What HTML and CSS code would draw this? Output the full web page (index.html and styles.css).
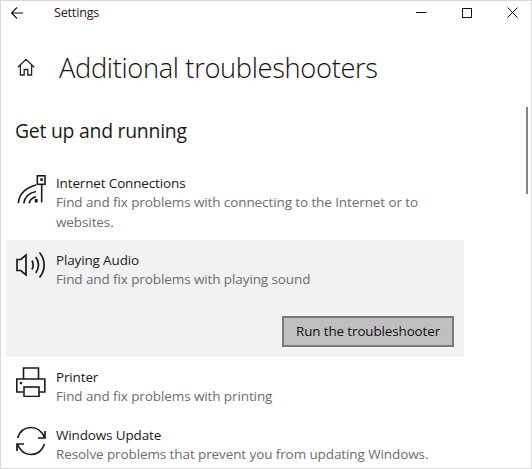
FILE: index.html
```html
<!DOCTYPE html>
<html lang="en">
<head>
<meta charset="utf-8">
<title>Settings</title>
<link rel="stylesheet" href="styles.css">
</head>
<body>
<div class="window">
  <header class="titlebar">
    <svg class="back" width="14" height="14" viewBox="0 0 14 14"><path d="M13 7H1.500M7 1.500 1.500 7 7 12.500" fill="none" stroke="#111" stroke-width="1.100"/></svg>
    <span class="app">Settings</span>
    <div class="controls">
      <svg width="11" height="11" viewBox="0 0 11 11"><path d="M0 5.500h10.500" stroke="#111" stroke-width="1"/></svg>
      <svg width="10" height="10" viewBox="0 0 10 10"><rect x=".5" y=".5" width="9" height="9" fill="none" stroke="#111"/></svg>
      <svg width="11" height="11" viewBox="0 0 11 11"><path d="M.5.500l10 10M10.500.500l-10 10" stroke="#111" stroke-width="1"/></svg>
    </div>
  </header>
  <div class="heading">
    <svg class="home" width="18" height="18" viewBox="0 0 18 18"><path d="M.8 9.200 9 1.300l8.200 7.900M3.400 7v10h3.800v-5.500h3.600V17h3.800V7" fill="none" stroke="#222" stroke-width="1.300"/></svg>
    <h1>Additional troubleshooters</h1>
  </div>
  <h2>Get up and running</h2>
  <ul class="list">
    <li class="item">
      <svg class="icon" width="30" height="30" viewBox="0 0 30 30"><g fill="none" stroke="#1a1a1a" stroke-width="1.600"><path d="M2.300 29.300C3 21 9 14 20 11"/><path d="M7.800 29.300C8.300 24 12 19.300 20 17.500"/><path d="M13.300 29.300c.4-3 2.200-5.300 6.700-6.500"/><rect x="21.300" y="1.800" width="7.700" height="8.500"/><path d="M25.700 10v18.500"/></g><rect x="24.300" y="4.300" width="2.600" height="2.600" fill="#1a1a1a"/><rect x="18.700" y="25" width="3" height="3.500" fill="#1a1a1a"/></svg>
      <div class="text"><div class="name">Internet Connections</div><div class="desc">Find and fix problems with connecting to the Internet or to websites.</div></div>
    </li>
    <li class="item selected">
      <svg class="icon" width="30" height="30" viewBox="0 0 30 30"><g fill="none" stroke="#1a1a1a" stroke-width="1.700"><path d="M1 8.500h3.800L10 4v20l-5.200-4.500H1z"/><path d="M16 9.500c1.600 3 1.600 6 0 9"/><path d="M19.800 6c3.400 5 3.400 11 0 16"/><path d="M23.500 1.500c6.200 7.500 6.200 17.500 0 25"/></g></svg>
      <div class="text"><div class="name">Playing Audio</div><div class="desc">Find and fix problems with playing sound</div></div>
      <button class="run" type="button">Run the troubleshooter</button>
    </li>
    <li class="item">
      <svg class="icon icon-up" width="30" height="30" viewBox="0 0 30 30"><g fill="none" stroke="#1a1a1a" stroke-width="1.600"><path d="M7.500 12V1h15v11"/><path d="M7.500 25H.8V12h28v13h-6"/><rect x="8" y="20" width="15" height="9.500"/></g><rect x="3.800" y="15" width="2.200" height="2.200" fill="#1a1a1a"/></svg>
      <div class="text"><div class="name">Printer</div><div class="desc">Find and fix problems with printing</div></div>
    </li>
    <li class="item">
      <svg class="icon" width="30" height="30" viewBox="0 0 30 30"><g fill="none" stroke="#1a1a1a" stroke-width="1.700"><path d="M1.500 12C4 5 9 1.500 15 1.500c5.500 0 10.500 3 13.500 10"/><path d="M29 5v7h-7"/><path d="M28.500 18C26 25 21 28.500 15 28.500 9.500 28.500 4.500 25.500 1.500 18.500"/><path d="M1 25v-7h7"/></g></svg>
      <div class="text"><div class="name">Windows Update</div><div class="desc">Resolve problems that prevent you from updating Windows.</div></div>
    </li>
  </ul>
  <div class="scrollbar"></div>
</div>
</body>
</html>
```
FILE: styles.css
```css
* { box-sizing: border-box; }
html, body { margin: 0; padding: 0; }
body {
  width: 532px;
  height: 469px;
  overflow: hidden;
  background: #fff;
  font-family: "Open Sans", "Noto Sans", sans-serif;
  color: #1a1a1a;
}
.window {
  position: relative;
  width: 532px;
  height: 469px;
  overflow: hidden;
  border: 1px solid #d9d9d9;
  padding: 0 0 0 5px;
}
.titlebar {
  display: flex;
  align-items: center;
  height: 23px;
  margin-left: -5px;
  padding: 0 0 0 9px;
}
.back { flex: none; }
.app {
  margin-left: 30px;
  font-size: 12.600px;
  letter-spacing: -.2px;
  color: #222;
}
.controls {
  display: flex;
  align-items: center;
  gap: 35px;
  margin-left: auto;
  padding-right: 13px;
}
.heading {
  display: flex;
  align-items: center;
  height: 40px;
  margin-top: 23px;
  margin-left: 11px;
}
.home { flex: none; }
h1 {
  margin: 0 0 0 24px;
  font-size: 27.300px;
  font-weight: 300;
  letter-spacing: -.35px;
  white-space: nowrap;
  color: #111;
}
h2 {
  margin: 29px 0 0 9px;
  height: 30px;
  font-size: 19.400px;
  line-height: 30px;
  font-weight: 400;
  letter-spacing: -.25px;
  color: #1a1a1a;
}
.list {
  list-style: none;
  width: 458px;
  margin: 17px 0 0;
  padding: 0;
}
.item {
  display: grid;
  grid-template-columns: 30px 1fr;
  align-content: start;
  column-gap: 10px;
  padding: 11px 10px 8px;
}
.icon { display: block; }
.icon-up { margin-top: -1px; }
.text { max-width: 375px; }
.name {
  font-size: 13.500px;
  line-height: 19px;
  letter-spacing: -.15px;
  color: #1a1a1a;
}
.desc {
  font-size: 13.500px;
  line-height: 19.500px;
  letter-spacing: -.1px;
  color: #6d6d6d;
}
.selected {
  background: #f2f2f2;
  height: 117px;
}
.run {
  grid-column: 1 / -1;
  justify-self: end;
  width: 172px;
  height: 31px;
  margin: 26px 0 0;
  background: #bfbfbf;
  border: 2px solid #7a7a7a;
  font: inherit;
  font-size: 13.400px;
  letter-spacing: -.1px;
  color: #111;
  padding: 0;
}
.scrollbar {
  position: absolute;
  right: 3px;
  top: 106px;
  width: 2px;
  height: 87px;
  background: #868686;
}
```
